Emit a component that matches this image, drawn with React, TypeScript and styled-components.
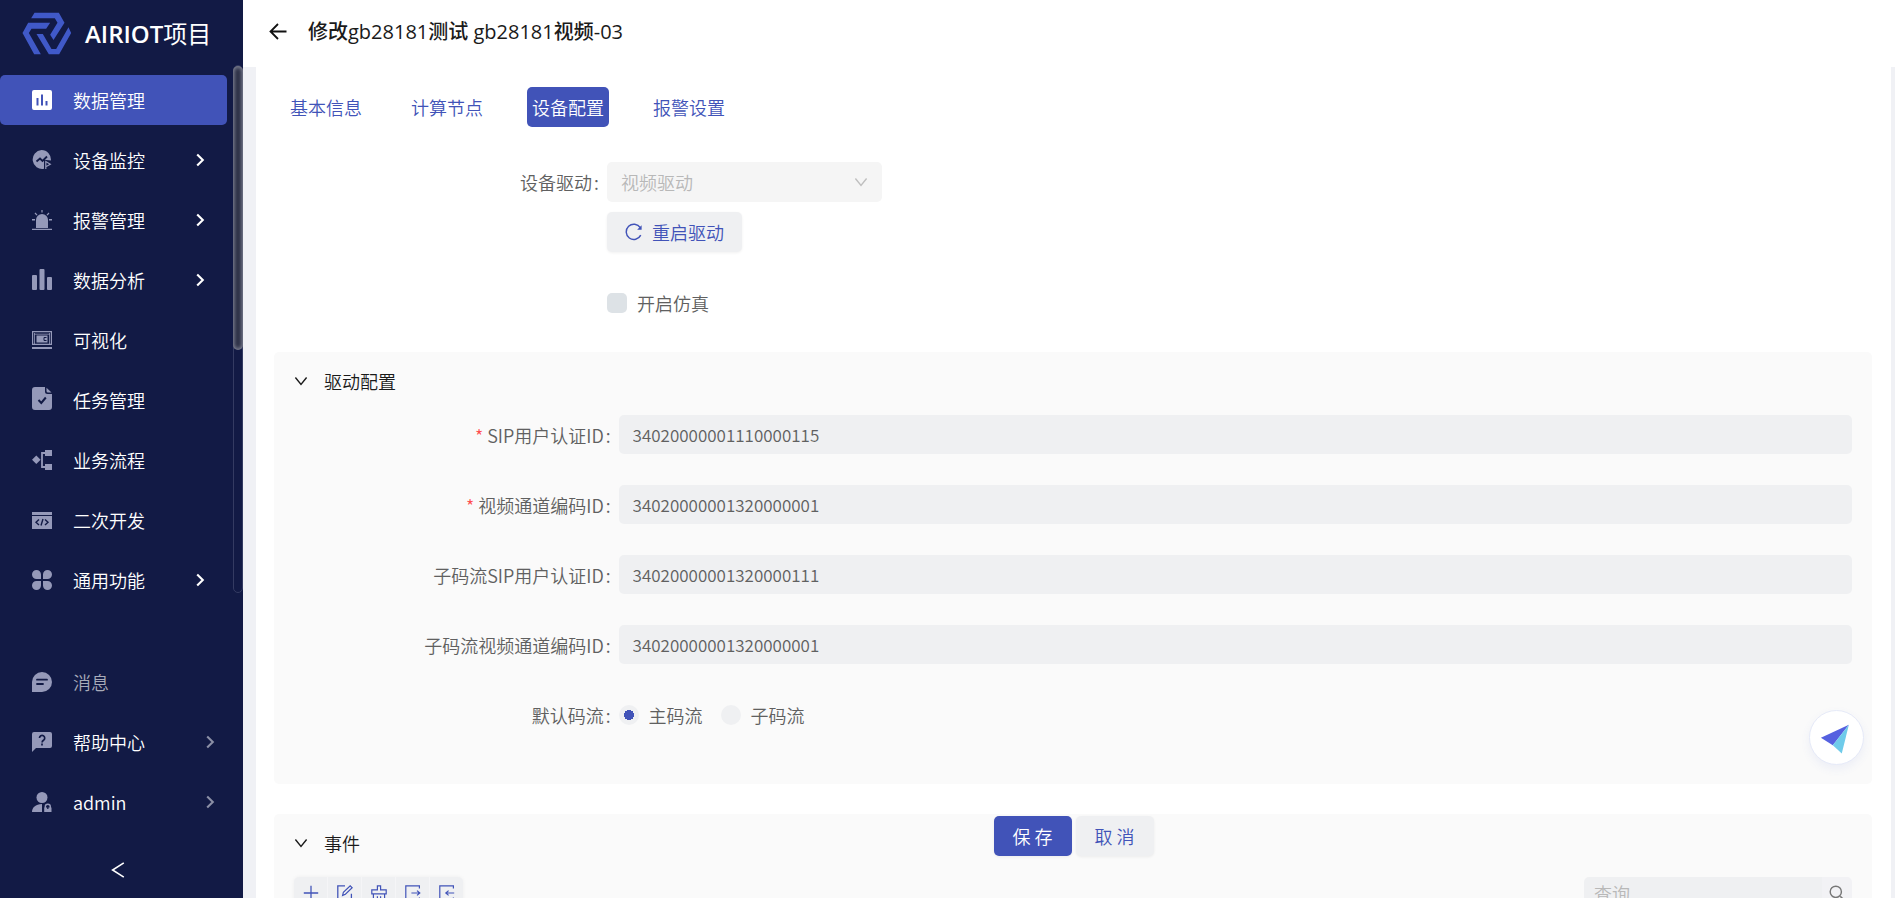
import React from "react";
import styled, { createGlobalStyle, css } from "styled-components";

const color = {
  navy: "#121a45",
  primary: "#4153b8",
  navIcon: "#9599b9",
  page: "#f0f1f5",
  panel: "#fafafa",
  field: "#eff0f2",
  text: "#606060",
  heading: "#1a1a1a",
};

const displayFont = `"Open Sans", "Noto Sans CJK SC", sans-serif`;

const GlobalStyle = createGlobalStyle`
  *, *::before, *::after { box-sizing: border-box; }
  body {
    margin: 0;
    color: ${color.text};
    font-family: "Noto Sans CJK SC", sans-serif;
    font-size: 18px;
    font-weight: 350;
    line-height: 24px;
  }
  button, input, select { font: inherit; color: inherit; margin: 0; }
  svg { display: block; flex: none; }
`;

const Shell = styled.div`
  display: flex;
  height: 100vh;
  overflow: hidden;
`;

/* ---------- sidebar ---------- */

const Sidebar = styled.aside`
  display: flex;
  flex-direction: column;
  flex: none;
  width: 243px;
  background: ${color.navy};
  color: #fff;
`;

const Brand = styled.div`
  display: flex;
  align-items: center;
  gap: 13px;
  height: 65px;
  padding: 2px 0 0 22px;
  font-family: ${displayFont};
  font-size: 24px;
  font-weight: 600;
  white-space: nowrap;
`;

const BrandSuffix = styled.span`
  font-weight: 400;
`;

const NavArea = styled.div`
  display: flex;
  flex: 1;
  min-height: 0;
`;

const NavList = styled.nav`
  display: flex;
  flex: 1;
  flex-direction: column;
  gap: 10px;
  min-height: 0;
  padding: 10px 6px 0 0;
  overflow: hidden;
`;

const ScrollTrack = styled.div`
  width: 10px;
  border: 1px solid #343b62;
  border-radius: 5px;
`;

const ScrollThumb = styled.div`
  height: 54%;
  margin: 0 -1px;
  border-radius: 5px;
  background: #2b2f45;
  box-shadow: inset 0 0 4px 1px #8f92a3;
`;

const NavItem = styled.a<{ $active?: boolean; $muted?: boolean }>`
  display: flex;
  align-items: center;
  flex: none;
  height: 50px;
  padding-left: 32px;
  padding-right: 20px;
  border-radius: 5px;
  color: ${(p) => (p.$muted ? "#a8abb9" : "#fff")};
  background: ${(p) => (p.$active ? color.primary : "transparent")};
  text-decoration: none;
`;

const NavIcon = styled.span<{ $active?: boolean }>`
  width: 41px;
  color: ${(p) => (p.$active ? "#fff" : color.navIcon)};
`;

const NavText = styled.span`
  flex: 1;
`;

const SideFooter = styled.div`
  display: flex;
  flex-direction: column;
  gap: 10px;
  padding: 64px 6px 0 0;
`;

const CollapseButton = styled.button`
  display: flex;
  align-items: center;
  justify-content: center;
  height: 61px;
  padding: 4px 0 0;
  border: 0;
  background: none;
  color: #fff;
`;

/* ---------- main column ---------- */

const Main = styled.main`
  position: relative;
  display: flex;
  flex: 1;
  flex-direction: column;
  min-width: 0;
  background: ${color.page};
`;

const TopBar = styled.header`
  display: flex;
  align-items: center;
  gap: 20px;
  flex: none;
  height: 67px;
  padding: 0 25px 3px;
  background: #fff;
`;

const BackButton = styled.button`
  padding: 0;
  border: 0;
  background: none;
  color: #111;
`;

const Title = styled.h1`
  margin: 0;
  color: ${color.heading};
  font-family: ${displayFont};
  font-size: 20px;
  font-weight: 500;
`;

const Sheet = styled.div`
  flex: 1;
  min-height: 0;
  margin: 0 4px 0 13px;
  padding: 20px 19px 0 18px;
  overflow: hidden;
  background: #fff;
`;

const Tabs = styled.nav`
  display: flex;
  gap: 39px;
  padding-left: 11px;
  margin-bottom: 35px;
`;

const Tab = styled.button<{ $active?: boolean }>`
  height: 40px;
  padding: 0 5px;
  border: 0;
  border-radius: 5px;
  background: ${(p) => (p.$active ? color.primary : "transparent")};
  color: ${(p) => (p.$active ? "#fff" : color.primary)};
`;

const FormRow = styled.div<{ $gap: number }>`
  display: grid;
  grid-template-columns: 5fr 19fr;
  align-items: center;
  min-height: 39px;
  margin-bottom: ${(p) => p.$gap}px;
`;

const labelText = css<{ $required?: boolean }>`
  padding-right: 8px;
  text-align: right;
  white-space: nowrap;
  &::before {
    content: ${(p) => (p.$required ? '"*"' : '""')};
    margin-right: 4px;
    color: #ff4d4f;
  }
  &::after {
    content: ":";
    margin-left: 2px;
  }
`;

const Label = styled.label<{ $required?: boolean }>`
  ${labelText}
`;

const GroupLabel = styled.span<{ $required?: boolean }>`
  ${labelText}
`;

const RowBody = styled.div`
  grid-column: 2;
  display: flex;
  align-items: center;
`;

const SelectWrap = styled.div`
  display: flex;
  align-items: center;
  width: 275px;
  color: #bfbfbf;
  svg {
    margin-left: -28px;
    pointer-events: none;
  }
`;

const DriverSelect = styled.select`
  appearance: none;
  width: 100%;
  height: 40px;
  padding: 0 30px 0 14px;
  border: 0;
  border-radius: 5px;
  background: #f5f5f5;
  color: #b8b8b8;
  opacity: 1;
`;

const Button = styled.button<{ $primary?: boolean }>`
  display: flex;
  align-items: center;
  justify-content: center;
  gap: 9px;
  min-width: 78px;
  height: 40px;
  padding: 0 18px;
  border: 0;
  border-radius: 5px;
  background: ${(p) => (p.$primary ? color.primary : color.field)};
  color: ${(p) => (p.$primary ? "#fff" : color.primary)};
  box-shadow: 0 1px 3px rgba(0, 0, 0, 0.06);
`;

const Choice = styled.label`
  display: flex;
  align-items: center;
  gap: 10px;
  margin-right: 18px;
`;

const Checkbox = styled.input`
  appearance: none;
  width: 20px;
  height: 20px;
  border-radius: 5px;
  background: #dde2e6;
`;

const Radio = styled.input`
  appearance: none;
  width: 20px;
  height: 20px;
  border-radius: 50%;
  background: ${color.field};
  &:checked {
    background: radial-gradient(circle, ${color.primary} 5px, ${color.field} 5px);
  }
`;

const Panel = styled.section`
  margin-bottom: 30px;
  padding: 0 20px 20px;
  border-radius: 5px;
  background: ${color.panel};
`;

const PanelHeader = styled.h2`
  display: flex;
  align-items: center;
  gap: 16px;
  height: 58px;
  margin: 0 0 5px;
  color: ${color.heading};
  font-size: 18px;
  font-weight: inherit;
`;

const TextField = styled.input`
  width: 100%;
  height: 39px;
  padding: 0 14px;
  border: 0;
  border-radius: 5px;
  background: ${color.field};
  font-size: 17px;
`;

const ListBar = styled.div`
  display: flex;
  align-items: flex-start;
  justify-content: space-between;
`;

const Tools = styled.div`
  display: flex;
  gap: 1px;
  overflow: hidden;
  border-radius: 5px;
  background: #f5f5f7;
  box-shadow: 0 0 4px rgba(0, 0, 0, 0.05);
`;

const ToolButton = styled.button`
  display: flex;
  align-items: center;
  justify-content: center;
  width: 33px;
  height: 32px;
  padding: 0;
  border: 0;
  background: ${color.field};
  color: ${color.primary};
`;

const Search = styled.form`
  display: flex;
  width: 268px;
  overflow: hidden;
  border-radius: 5px;
`;

const SearchInput = styled.input`
  flex: 1;
  min-width: 0;
  height: 32px;
  padding: 0 10px;
  border: 0;
  background: ${color.field};
  &::placeholder { color: #b8b8b8; }
`;

const SearchButton = styled.button`
  display: flex;
  align-items: center;
  justify-content: center;
  width: 30px;
  padding: 0;
  border: 0;
  background: #f2f2f5;
  color: #777;
`;

const ActionBar = styled.div`
  position: absolute;
  right: 4px;
  bottom: 42px;
  left: 13px;
  display: flex;
  justify-content: center;
  gap: 4px;
`;

const Assistant = styled.button`
  position: absolute;
  right: 31px;
  bottom: 133px;
  width: 55px;
  height: 55px;
  padding: 0;
  border: 1px solid #e6eaf8;
  border-radius: 50%;
  background: #fff;
  box-shadow: 0 4px 10px rgba(80, 100, 200, 0.08);
`;

/* ---------- icons ---------- */

const Svg = ({ size = 20, children }: { size?: number; children: React.ReactNode }) => (
  <svg width={size} height={size} viewBox="0 0 20 20" fill="currentColor" aria-hidden="true">
    {children}
  </svg>
);

const line = {
  fill: "none",
  stroke: "currentColor",
};

const Logo = () => (
  <svg width="50" height="43" viewBox="66 34 149 129" fill="#4059c8" aria-hidden="true">
    <path d="M103 36h73l17 30-33 52-10-16 22-36-8-13H93z" />
    <path d="M84 66h66l-12 18H94l-8 13 36 64h-20L67 97z" />
    <path d="M109 100h19l26 45h14l37-65 8 17-36 64h-31z" />
  </svg>
);

const Chevron = ({ dir, size, width, tone }: { dir: "left" | "right" | "down"; size: number; width: number; tone?: string }) => {
  const d = {
    left: "M16 1L2 10l14 9",
    right: "M6 2l8 8-8 8",
    down: "M2 5l8 10 8-10",
  }[dir];
  return (
    <svg width={size} height={size} viewBox="0 0 20 20" fill="none" stroke={tone ?? "currentColor"} strokeWidth={width} aria-hidden="true">
      <path d={d} />
    </svg>
  );
};

const icons = {
  data: (
    <Svg>
      <path fillRule="evenodd" d="M2 0h16a2 2 0 0 1 2 2v16a2 2 0 0 1-2 2H2a2 2 0 0 1-2-2V2a2 2 0 0 1 2-2zM4.500 8v7.500h2V8zM9 4.500v11h2v-11zM13.500 11v4.500h2V11z" />
    </Svg>
  ),
  monitor: (
    <Svg>
      <path d="M9.500 0a9.500 9.500 0 0 1 9.400 10.500L12 9.800v9A9.500 9.500 0 1 1 9.500 0z" />
      <path d="M4.500 11.500l3.500-3 2.500 2.500L15 6.500" {...line} stroke={color.navy} strokeWidth="1.800" />
      <path d="M13.800 19v-7.500l4.500 2.800-4 2.200" {...line} strokeWidth="1.200" />
    </Svg>
  ),
  alarm: (
    <Svg>
      <path d="M4 18v-8a6 6 0 0 1 12 0v8z" />
      <path d="M0 18.800h20v1.200H0zM9.400 0h1.200v2.500H9.400zM0 9h3v1.500H0zM17 9h3v1.500h-3z" />
      <path d="M3 3l2 2.200M17 3l-2 2.200" {...line} strokeWidth="1.200" />
    </Svg>
  ),
  analysis: (
    <svg width="20" height="23" viewBox="0 0 20 23" fill="currentColor" aria-hidden="true">
      <rect y="6" width="5" height="15" rx="1" />
      <rect x="7.500" y="0" width="5" height="21" rx="1" />
      <rect x="15" y="8" width="5" height="13" rx="1" />
    </svg>
  ),
  visual: (
    <Svg>
      <path d="M.600 1.600h18.800v12.800H.600z" {...line} strokeWidth="1.200" />
      <path d="M0 17h20v2H0zM4.500 5.500h11v7h-11z" />
      <path d="M2.500 3v11M17.500 3v11M2 4.200h16" {...line} strokeWidth=".800" />
      <path d="M14.500 7.500h-2.500v3h2.500" {...line} stroke={color.navy} />
    </Svg>
  ),
  task: (
    <svg width="20" height="27" viewBox="0 0 20 27" fill="currentColor" aria-hidden="true">
      <path d="M3 0h10v4.500A2.500 2.500 0 0 0 15.500 7H20v13a3 3 0 0 1-3 3H3a3 3 0 0 1-3-3V3a3 3 0 0 1 3-3z" />
      <path d="M14.500.800L19.500 5.600h-3.500a1.500 1.500 0 0 1-1.500-1.500z" />
      <path d="M6.500 13l2.800 3 4.500-5.500" {...line} stroke={color.navy} strokeWidth="2" />
    </svg>
  ),
  flow: (
    <Svg>
      <path d="M4.300 5.500l4.300 4.300-4.300 4.300L0 9.800zM13 0h7v6h-7zM13 14h7v6h-7z" />
      <path d="M13 3h-3v14h3" {...line} strokeWidth="1.800" />
    </Svg>
  ),
  code: (
    <Svg>
      <path d="M0 2h20v3H0zM0 6h20v13H0z" />
      <path d="M7 9.500l-3 2.800 3 2.800M13 9.500l3 2.800-3 2.800M11 9l-2 6.500" {...line} stroke={color.navy} strokeWidth="1.400" />
    </Svg>
  ),
  common: (
    <Svg>
      <path d="M4.500 0A4.500 4.500 0 0 1 9 4.500V9H4.500a4.500 4.500 0 0 1 0-9zM15.500 0a4.500 4.500 0 0 1 0 9H11V4.500A4.500 4.500 0 0 1 15.500 0zM4.500 11H9v4.500A4.500 4.500 0 1 1 4.500 11zM11 11h4.500a4.500 4.500 0 1 1-4.500 4.500z" />
    </Svg>
  ),
  message: (
    <Svg>
      <path d="M10 0a10 10 0 0 1 0 20H0V10A10 10 0 0 1 10 0z" />
      <path d="M5 7.700h10M5 12h6" {...line} stroke={color.navy} strokeWidth="1.800" strokeLinecap="round" />
    </Svg>
  ),
  help: (
    <Svg>
      <path d="M2 0h16a2 2 0 0 1 2 2v12a2 2 0 0 1-2 2H4l-4 4V2a2 2 0 0 1 2-2z" />
      <path d="M7.500 6a2.600 2.600 0 1 1 4 2.200c-1 .700-1.400 1.100-1.400 2.300M10 11.500v2" {...line} stroke={color.navy} strokeWidth="1.700" />
    </Svg>
  ),
  user: (
    <Svg>
      <circle cx="10" cy="5.500" r="5.500" />
      <path d="M0 20c0-4.500 3.500-7.500 10-8v8zM12.200 15.500h7.300V20h-7.300z" />
      <path d="M13.300 16v-1.300a2.500 2.500 0 0 1 5 0V16" {...line} strokeWidth="1.400" />
      <circle cx="15.800" cy="16" r=".900" fill={color.navy} />
    </Svg>
  ),
  back: (
    <Svg>
      <path d="M10 2L2.500 9.500 10 17M2.500 9.500h16" {...line} strokeWidth="1.800" />
    </Svg>
  ),
  reload: (
    <Svg size={18}>
      <path d="M17.500 13.500A8.500 8.500 0 1 1 17 5.200" {...line} strokeWidth="1.600" />
      <path d="M18.500 2.500v5h-5z" />
    </Svg>
  ),
  add: (
    <Svg size={16}>
      <path d="M10 1v18M1 10h18" {...line} strokeWidth="1.600" />
    </Svg>
  ),
  edit: (
    <Svg size={16}>
      <path d="M10 1H1v18h17v-8" {...line} strokeWidth="1.600" />
      <path d="M7 13l1-4 8.500-8 2.500 2.500-8.500 8z" {...line} strokeWidth="1.500" />
    </Svg>
  ),
  clear: (
    <Svg size={16}>
      <path d="M8 1h4v5h7v5H1V6h7zM3 11v8h14v-8M8 19v-5M12 19v-5" {...line} strokeWidth="1.500" />
    </Svg>
  ),
  exportOut: (
    <Svg size={16}>
      <path d="M18 4.500V1H1v18h17v-3.500M8 10h10M15 7l3.500 3-3.500 3" {...line} strokeWidth="1.500" />
    </Svg>
  ),
  importIn: (
    <Svg size={16}>
      <path d="M18 4.500V1H1v18h17v-3.500M19 10H9M12 7l-3.500 3 3.500 3" {...line} strokeWidth="1.500" />
    </Svg>
  ),
  search: (
    <Svg size={16}>
      <path d="M14 14l5 5" {...line} strokeWidth="2" />
      <circle cx="8.500" cy="8.500" r="7" {...line} strokeWidth="1.800" />
    </Svg>
  ),
};

/* ---------- data ---------- */

const navItems = [
  { icon: icons.data, text: "数据管理", active: true },
  { icon: icons.monitor, text: "设备监控", arrow: true },
  { icon: icons.alarm, text: "报警管理", arrow: true },
  { icon: icons.analysis, text: "数据分析", arrow: true },
  { icon: icons.visual, text: "可视化" },
  { icon: icons.task, text: "任务管理" },
  { icon: icons.flow, text: "业务流程" },
  { icon: icons.code, text: "二次开发" },
  { icon: icons.common, text: "通用功能", arrow: true },
];

const footerItems = [
  { icon: icons.message, text: "消息", muted: true },
  { icon: icons.help, text: "帮助中心", arrow: true },
  { icon: icons.user, text: "admin", arrow: true },
];

const tabs = ["基本信息", "计算节点", "设备配置", "报警设置"];

const driverFields = [
  { id: "sip", label: "SIP用户认证ID", value: "34020000001110000115", required: true },
  { id: "channel", label: "视频通道编码ID", value: "34020000001320000001", required: true },
  { id: "sub-sip", label: "子码流SIP用户认证ID", value: "34020000001320000111" },
  { id: "sub-channel", label: "子码流视频通道编码ID", value: "34020000001320000001" },
];

const tools = [
  { name: "添加", icon: icons.add },
  { name: "编辑", icon: icons.edit },
  { name: "清空", icon: icons.clear },
  { name: "导出", icon: icons.exportOut },
  { name: "导入", icon: icons.importIn },
];

export default function App() {
  return (
    <Shell>
      <GlobalStyle />
      <Sidebar>
        <Brand>
          <Logo />
          <span>
            AIRIOT<BrandSuffix>项目</BrandSuffix>
          </span>
        </Brand>
        <NavArea>
          <NavList>
            {navItems.map((item) => (
              <NavItem key={item.text} href="#" $active={item.active}>
                <NavIcon $active={item.active}>{item.icon}</NavIcon>
                <NavText>{item.text}</NavText>
                {item.arrow && <Chevron dir="right" size={14} width={3} />}
              </NavItem>
            ))}
          </NavList>
          <ScrollTrack>
            <ScrollThumb />
          </ScrollTrack>
        </NavArea>
        <SideFooter>
          {footerItems.map((item) => (
            <NavItem key={item.text} href="#" $muted={item.muted}>
              <NavIcon>{item.icon}</NavIcon>
              <NavText>{item.text}</NavText>
              {item.arrow && <Chevron dir="right" size={14} width={3} tone="#8b8fa6" />}
            </NavItem>
          ))}
          <CollapseButton aria-label="收起菜单">
            <Chevron dir="left" size={16} width={2} />
          </CollapseButton>
        </SideFooter>
      </Sidebar>

      <Main>
        <TopBar>
          <BackButton aria-label="返回">{icons.back}</BackButton>
          <Title>修改gb28181测试 gb28181视频-03</Title>
        </TopBar>

        <Sheet>
          <Tabs>
            {tabs.map((tab) => (
              <Tab key={tab} type="button" $active={tab === "设备配置"}>
                {tab}
              </Tab>
            ))}
          </Tabs>

          <FormRow $gap={10}>
            <Label htmlFor="driver">设备驱动</Label>
            <SelectWrap>
              <DriverSelect id="driver" disabled>
                <option>视频驱动</option>
              </DriverSelect>
              <Chevron dir="down" size={14} width={2} />
            </SelectWrap>
          </FormRow>
          <FormRow $gap={31}>
            <RowBody>
              <Button type="button">
                {icons.reload}
                重启驱动
              </Button>
            </RowBody>
          </FormRow>
          <FormRow $gap={30}>
            <RowBody>
              <Choice>
                <Checkbox type="checkbox" />
                开启仿真
              </Choice>
            </RowBody>
          </FormRow>

          <Panel>
            <PanelHeader>
              <Chevron dir="down" size={14} width={2} />
              驱动配置
            </PanelHeader>
            {driverFields.map((field) => (
              <FormRow key={field.id} $gap={31}>
                <Label htmlFor={field.id} $required={field.required}>
                  {field.label}
                </Label>
                <TextField id={field.id} defaultValue={field.value} />
              </FormRow>
            ))}
            <FormRow $gap={30}>
              <GroupLabel id="stream">默认码流</GroupLabel>
              <RowBody role="radiogroup" aria-labelledby="stream">
                <Choice>
                  <Radio type="radio" name="stream" defaultChecked />
                  主码流
                </Choice>
                <Choice>
                  <Radio type="radio" name="stream" />
                  子码流
                </Choice>
              </RowBody>
            </FormRow>
          </Panel>

          <Panel>
            <PanelHeader>
              <Chevron dir="down" size={14} width={2} />
              事件
            </PanelHeader>
            <ListBar>
              <Tools>
                {tools.map((tool) => (
                  <ToolButton key={tool.name} type="button" aria-label={tool.name}>
                    {tool.icon}
                  </ToolButton>
                ))}
              </Tools>
              <Search>
                <SearchInput type="text" placeholder="查询" aria-label="查询" />
                <SearchButton type="button" aria-label="搜索">
                  {icons.search}
                </SearchButton>
              </Search>
            </ListBar>
          </Panel>
        </Sheet>

        <ActionBar>
          <Button type="button" $primary>
            保 存
          </Button>
          <Button type="button">取 消</Button>
        </ActionBar>
        <Assistant type="button" aria-label="智能助手">
          <svg width="53" height="53" viewBox="0 0 165 165" aria-hidden="true">
            <path d="M34 83l87-40-50 64z" fill="#5561e0" />
            <path d="M121 43L99 132 71 107z" fill="#6fcbea" />
          </svg>
        </Assistant>
      </Main>
    </Shell>
  );
}
